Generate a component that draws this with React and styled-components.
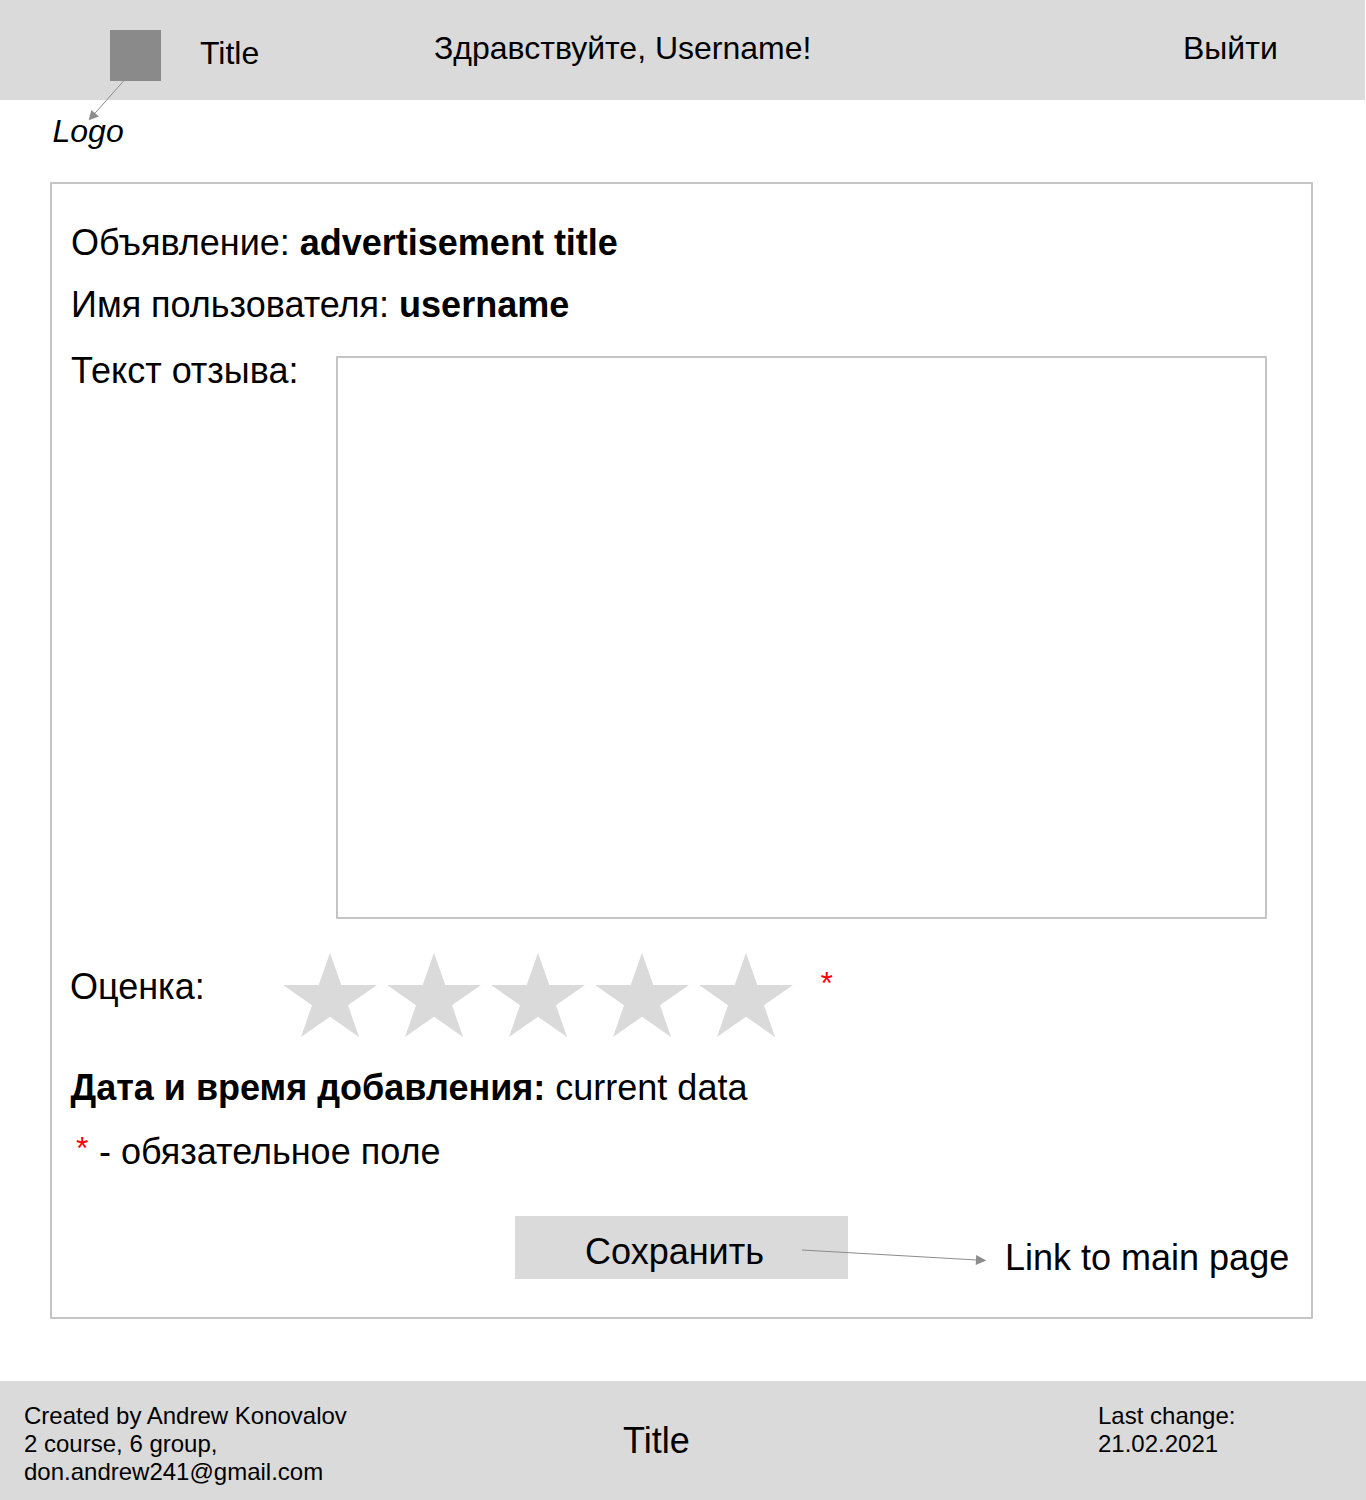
import React from "react";
import styled, { createGlobalStyle } from "styled-components";

const GlobalStyle = createGlobalStyle`
  * { box-sizing: border-box; }
  body {
    margin: 0;
    background: #fff;
    color: #000;
    font-family: "Liberation Sans", Arial, sans-serif;
  }
`;

const Page = styled.div`
  position: relative;
  display: flex;
  flex-direction: column;
  width: 1366px;
  height: 1500px;
  overflow: hidden;
`;

const Header = styled.header`
  display: flex;
  align-items: flex-start;
  width: 1365px;
  height: 100px;
  padding: 30px 0 0 110px;
  background: #dadada;
`;

const LogoMark = styled.div`
  width: 51px;
  height: 51px;
  background: #8a8a8a;
`;

const HeaderText = styled.div`
  margin: ${(p) => p.$top}px 0 0 ${(p) => p.$left}px;
  width: ${(p) => p.$width}px;
  font-size: 32px;
  line-height: 36px;
  white-space: nowrap;
`;

const LogoCaption = styled.div`
  height: 36px;
  margin: 13px 0 33px 52.5px;
  font-size: 32px;
  font-style: italic;
  line-height: 36px;
`;

const Panel = styled.main`
  display: flex;
  flex-direction: column;
  width: 1263px;
  height: 1137px;
  margin-left: 50px;
  padding: 38px 0 0 19px;
  border: 2px solid #c4c4c4;
  border-radius: 1px;
`;

const Row = styled.div`
  display: flex;
  align-items: flex-start;
  height: ${(p) => p.$height}px;
`;

const Label = styled.div`
  width: ${(p) => (p.$width ? `${p.$width}px` : "auto")};
  margin-top: ${(p) => p.$top ?? 1}px;
  margin-left: ${(p) => p.$left || 0}px;
  font-size: 36px;
  line-height: 40px;
  white-space: nowrap;
`;

const ReviewText = styled.div`
  width: 931px;
  height: 563px;
  border: 2px solid #c4c4c4;
  border-radius: 1px;
`;

const Stars = styled.div`
  display: flex;
  gap: 10px;
`;

const StarShape = styled.svg`
  display: block;
  width: 94px;
  height: 84px;
  fill: #dadada;
`;

const Required = styled.span`
  margin: ${(p) => p.$top}px 0 0 ${(p) => p.$left}px;
  width: ${(p) => p.$width}px;
  color: #f00;
  font-size: 32px;
  line-height: 36px;
`;

const SaveButton = styled.button`
  width: 333px;
  height: 63px;
  margin-left: 444px;
  padding: 9px 0 0;
  border: 0;
  background: #dadada;
  color: #000;
  font: 36px/40px "Liberation Sans", Arial, sans-serif;
  text-indent: -14px;
`;

const LinkNote = styled.div`
  margin: 22px 0 0 157px;
  font-size: 36px;
  line-height: 40px;
  white-space: nowrap;
`;

const Footer = styled.footer`
  display: flex;
  align-items: flex-start;
  height: 119px;
  margin-top: 62px;
  padding: 21px 0 0 24px;
  background: #dadada;
`;

const FooterText = styled.div`
  width: ${(p) => p.$width}px;
  font-size: 24px;
  line-height: 28px;
`;

const FooterTitle = styled.div`
  width: 475px;
  padding-top: 19px;
  font-size: 36px;
  line-height: 40px;
`;

const Arrow = styled.svg`
  position: absolute;
  left: ${(p) => p.$x}px;
  top: ${(p) => p.$y}px;
  stroke: #8c8c8c;
  fill: #8c8c8c;
  pointer-events: none;
`;

const Star = () => (
  <StarShape viewBox="283 953 94 84">
    <path d="M330 953 341.3 985H377L348 1005.2 359 1037 330 1016.7 301 1037 312 1005.2 283.2 985H318.7Z" />
  </StarShape>
);

export default function App() {
  return (
    <Page>
      <GlobalStyle />
      <Header>
        <LogoMark />
        <HeaderText $left={39} $top={5} $width={234}>Title</HeaderText>
        <HeaderText $left={0} $top={0} $width={749}>Здравствуйте, Username!</HeaderText>
        <HeaderText $left={0} $top={0} $width={110}>Выйти</HeaderText>
      </Header>
      <LogoCaption>Logo</LogoCaption>
      <Panel>
        <Row $height={62}>
          <Label>Объявление: <b>advertisement title</b></Label>
        </Row>
        <Row $height={72}>
          <Label>Имя пользователя: <b>username</b></Label>
        </Row>
        <Row $height={597}>
          <Label $width={265} $top={-5}>Текст отзыва:</Label>
          <ReviewText />
        </Row>
        <Row $height={114}>
          <Label $width={213} $left={-1} $top={14}>Оценка:</Label>
          <Stars>
            {[1, 2, 3, 4, 5].map((n) => <Star key={n} />)}
          </Stars>
          <Required $left={27.5} $top={12} $width={14}>*</Required>
        </Row>
        <Row $height={64}>
          <Label $left={-0.5}><b>Дата и время добавления:</b> current data</Label>
        </Row>
        <Row $height={85}>
          <Required $left={5} $top={-1} $width={23}>*</Required>
          <Label>- обязательное поле</Label>
        </Row>
        <Row $height={63}>
          <SaveButton type="button">Сохранить</SaveButton>
          <LinkNote>Link to main page</LinkNote>
        </Row>
      </Panel>
      <Footer>
        <FooterText $width={599}>
          Created by Andrew Konovalov<br />2 course, 6 group,<br />don.andrew241@gmail.com
        </FooterText>
        <FooterTitle>Title</FooterTitle>
        <FooterText $width={200}>Last change:<br />21.02.2021</FooterText>
      </Footer>
      <Arrow $x={80} $y={80} width="50" height="50" viewBox="80 80 50 50">
        <path d="M124 80.5 94 114.3" />
        <path stroke="none" d="M88.7 120.3 91.3 110 98.9 116.6Z" />
      </Arrow>
      <Arrow $x={800} $y={1240} width="190" height="30" viewBox="800 1240 190 30">
        <path d="M802 1250 977 1260" />
        <path stroke="none" d="M986.3 1260.5 976.2 1255 975.7 1265Z" />
      </Arrow>
    </Page>
  );
}
